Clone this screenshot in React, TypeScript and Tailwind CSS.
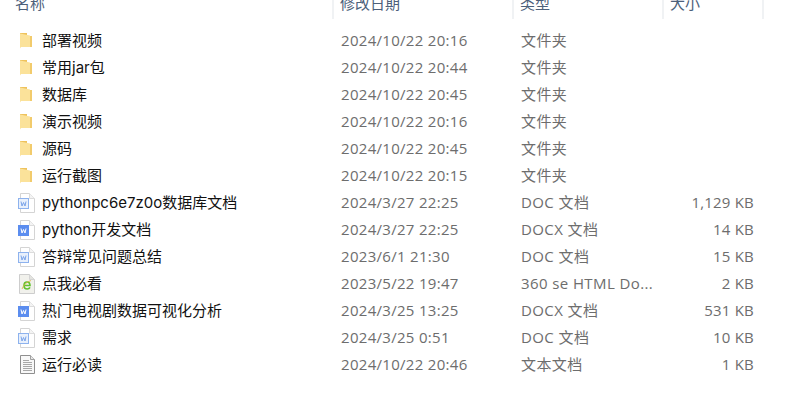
const font = "font-['Open_Sans','Noto_Sans_CJK_SC',sans-serif]";

type Row = { name: string; date: string; type: string; size?: string; icon: "folder" | "doc" | "docx" | "html" | "txt" };

const rows: Row[] = [
  { name: "部署视频", date: "2024/10/22 20:16", type: "文件夹", icon: "folder" },
  { name: "常用jar包", date: "2024/10/22 20:44", type: "文件夹", icon: "folder" },
  { name: "数据库", date: "2024/10/22 20:45", type: "文件夹", icon: "folder" },
  { name: "演示视频", date: "2024/10/22 20:16", type: "文件夹", icon: "folder" },
  { name: "源码", date: "2024/10/22 20:45", type: "文件夹", icon: "folder" },
  { name: "运行截图", date: "2024/10/22 20:15", type: "文件夹", icon: "folder" },
  { name: "pythonpc6e7z0o数据库文档", date: "2024/3/27 22:25", type: "DOC 文档", size: "1,129 KB", icon: "doc" },
  { name: "python开发文档", date: "2024/3/27 22:25", type: "DOCX 文档", size: "14 KB", icon: "docx" },
  { name: "答辩常见问题总结", date: "2023/6/1 21:30", type: "DOC 文档", size: "15 KB", icon: "doc" },
  { name: "点我必看", date: "2023/5/22 19:47", type: "360 se HTML Do...", size: "2 KB", icon: "html" },
  { name: "热门电视剧数据可视化分析", date: "2024/3/25 13:25", type: "DOCX 文档", size: "531 KB", icon: "docx" },
  { name: "需求", date: "2024/3/25 0:51", type: "DOC 文档", size: "10 KB", icon: "doc" },
  { name: "运行必读", date: "2024/10/22 20:46", type: "文本文档", size: "1 KB", icon: "txt" },
];

function FolderIcon() {
  return (
    <svg width="14" height="18" viewBox="0 0 14 18" className="ml-[1px]">
      <path d="M1 1h7v3h5v11H1z" fill="#eec25c" />
      <path d="M1 1.500l10 2V15H2l-1 1.500z" fill="#fbe29a" />
      <path d="M11 4h2v11h-2z" fill="#f2cb6c" />
    </svg>
  );
}

function PageIcon({ solid }: { solid: boolean }) {
  return (
    <svg width="17" height="20" viewBox="0 0 17 20">
      <path d="M2.500 .5h9l5 5v14h-14z" fill="#fff" stroke="#d4d4d4" />
      <path d="M11.500 .5v5h5" fill="#f4f4f4" stroke="#dcdcdc" />
      <rect x=".5" y="5.500" width="10" height="10" fill={solid ? "#5b8def" : "#e8f0fc"} stroke={solid ? "#5b8def" : "#8db2ee"} />
      <path d="M3 8.500l1 4.500 1.500-3.500L7 13l1-4.500" fill="none" stroke={solid ? "#fff" : "#7aa4ea"} strokeWidth="1" />
    </svg>
  );
}

function HtmlIcon() {
  return (
    <svg width="17" height="20" viewBox="0 0 17 20" className="ml-[1px]">
      <path d="M.5 .5h10l5 5v14H.5z" fill="#f1f1ec" stroke="#cdcdcd" />
      <path d="M10.500 .5v5h5" fill="#e4e4e0" stroke="#d4d4d4" />
      <path d="M5 11.500h6c0-2.200-1.200-3.500-3-3.500s-3 1.500-3 3.500 1.300 3.500 3.200 3.500c1.300 0 2.300-.6 2.800-1.600" fill="none" stroke="#62c22e" strokeWidth="1.600" />
      <path d="M3 15c1.500-4 4.500-7 9-8.500" fill="none" stroke="#e0b13c" strokeWidth=".8" />
    </svg>
  );
}

function TextIcon() {
  return (
    <svg width="15" height="19" viewBox="0 0 15 19" className="ml-[2px]">
      <path d="M.5 .5h10l4 4v14H.5z" fill="#f8f8f8" stroke="#8f8f8f" />
      <path d="M10.500 .5v4h4" fill="#e8e8e8" stroke="#a0a0a0" />
      <path d="M3 5.500h6M3 7.500h9M3 9.500h9M3 11.500h9M3 13.500h9M3 15.500h9" stroke="#a8a8a8" />
    </svg>
  );
}

function FileIcon({ icon }: { icon: Row["icon"] }) {
  if (icon === "folder") return <FolderIcon />;
  if (icon === "doc") return <PageIcon solid={false} />;
  if (icon === "docx") return <PageIcon solid />;
  if (icon === "html") return <HtmlIcon />;
  return <TextIcon />;
}

function HeaderCell({ label, width, pad }: { label: string; width: string; pad: string }) {
  return (
    <div className={`${width} ${pad} h-full border-r-2 border-[#f0f2f4] text-[#4c607a] text-[15px] leading-[6px]`}>
      {label}
    </div>
  );
}

export default function App() {
  return (
    <div className={`w-[794px] h-[411px] bg-white overflow-hidden ${font}`}>
      <div className="flex h-[19px] overflow-hidden">
        <HeaderCell label="名称" width="w-[334px]" pad="pl-[15px]" />
        <HeaderCell label="修改日期" width="w-[180px]" pad="pl-[6px]" />
        <HeaderCell label="类型" width="w-[150px]" pad="pl-[6px]" />
        <HeaderCell label="大小" width="w-[100px]" pad="pl-[6px]" />
      </div>
      <div className="pt-[9px]">
        {rows.map((r) => (
          <div key={r.name} className="flex h-[27px] items-center text-[15px]">
            <div className="w-[42px] flex pl-[18px] -mt-[2px]">
              <FileIcon icon={r.icon} />
            </div>
            <div className="w-[299px] text-[#111] font-['Inter','Noto_Sans_CJK_SC',sans-serif]">{r.name}</div>
            <div className="w-[180px] -mt-[2px] text-[#6d6d6d] tracking-[0.3px]">{r.date}</div>
            <div className="w-[140px] -mt-[2px] text-[#6d6d6d] tracking-[0.4px]">{r.type}</div>
            <div className="w-[93px] -mt-[2px] text-right text-[#6d6d6d] tracking-[0.2px]">{r.size}</div>
          </div>
        ))}
      </div>
    </div>
  );
}
